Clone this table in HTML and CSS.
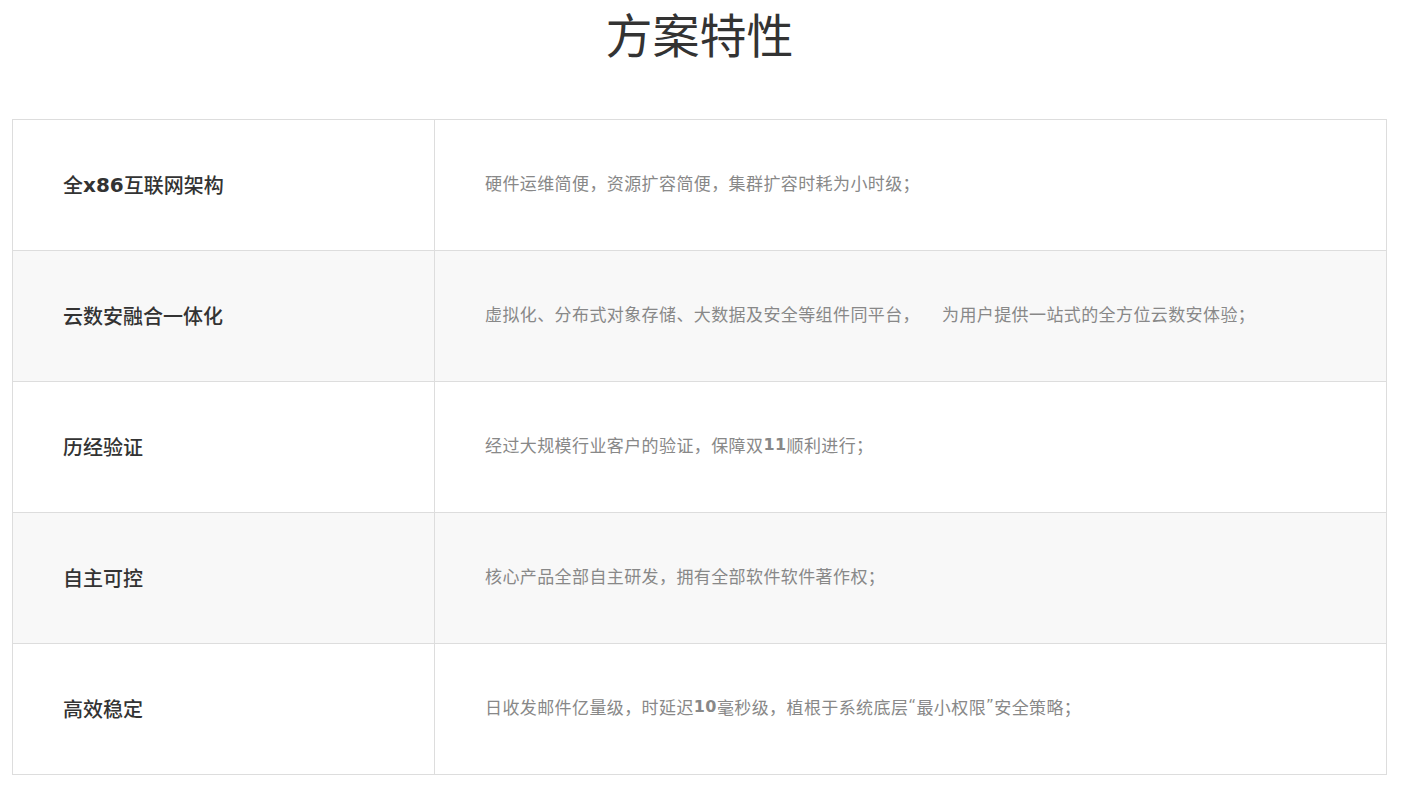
FILE: index.html
```html
<!DOCTYPE html>
<html lang="zh-CN">
<head>
<meta charset="utf-8">
<title>方案特性</title>
<link rel="stylesheet" href="styles.css">
</head>
<body>
<section class="features">
  <h1 class="features-title">方案特性</h1>
  <div class="feature-table">
    <div class="feature-row">
      <div class="feature-name">全<b class="latin">x86</b>互联网架构</div>
      <div class="feature-desc">硬件运维简便，资源扩容简便，集群扩容时耗为小时级；</div>
    </div>
    <div class="feature-row alt">
      <div class="feature-name">云数安融合一体化</div>
      <div class="feature-desc">虚拟化、分布式对象存储、大数据及安全等组件同平台，<span class="gap"></span>为用户提供一站式的全方位云数安体验；</div>
    </div>
    <div class="feature-row">
      <div class="feature-name">历经验证</div>
      <div class="feature-desc">经过大规模行业客户的验证，保障双<b class="num">11</b>顺利进行；</div>
    </div>
    <div class="feature-row alt">
      <div class="feature-name">自主可控</div>
      <div class="feature-desc">核心产品全部自主研发，拥有全部软件软件著作权；</div>
    </div>
    <div class="feature-row">
      <div class="feature-name">高效稳定</div>
      <div class="feature-desc">日收发邮件亿量级，时延迟<b class="num">10</b>毫秒级，植根于系统底层<span class="quote">“</span>最小权限<span class="quote">”</span>安全策略；</div>
    </div>
  </div>
</section>
</body>
</html>
```
FILE: styles.css
```css
html, body {
  margin: 0;
  padding: 0;
  background: #fff;
}
body {
  font-family: "Noto Sans CJK SC", "Noto Sans", sans-serif;
  color: #333;
}
.features {
  padding: 0 15px 0 12px;
}
.features-title {
  margin: 0;
  height: 119px;
  padding-top: 0;
  box-sizing: border-box;
  text-align: center;
  font-size: 47px;
  font-weight: 400;
  line-height: 66px;
  color: #333;
}
.feature-table {
  border: 1px solid #ddd;
}
.feature-row {
  display: grid;
  grid-template-columns: 422px 1fr;
  height: 130px;
  border-bottom: 1px solid #ddd;
  background: #fff;
}
.feature-row:last-child {
  border-bottom: none;
}
.feature-row.alt {
  background: #f8f8f8;
}
.feature-name {
  display: flex;
  align-items: center;
  padding-left: 50px;
  padding-bottom: 1px;
  border-right: 1px solid #ddd;
  font-size: 20px;
  font-weight: 500;
  color: #333;
}
.latin {
  font-family: "DejaVu Sans", sans-serif;
  font-weight: 700;
  font-size: 20px;
}
.feature-desc {
  display: flex;
  align-items: center;
  padding-left: 50px;
  padding-bottom: 6px;
  font-size: 17px;
  letter-spacing: 0.4px;
  color: #888;
  white-space: nowrap;
}
.num {
  font-family: "DejaVu Sans", sans-serif;
  font-weight: 700;
  font-size: 16px;
  color: #888;
}
.quote {
  font-family: "DejaVu Sans", sans-serif;
  font-size: 15px;
}
.gap {
  display: inline-block;
  width: 22px;
}
```
